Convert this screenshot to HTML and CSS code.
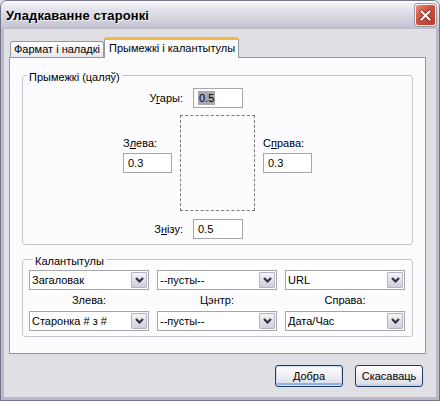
FILE: index.html
```html
<!DOCTYPE html>
<html lang="be">
<head>
<meta charset="utf-8">
<title>Уладкаванне старонкі</title>
<link rel="stylesheet" href="styles.css">
</head>
<body>
<div class="window">
  <div class="titlebar">
    <span class="title">Уладкаванне старонкі</span>
    <div class="close"><svg width="13" height="13" viewBox="0 0 13 13"><path d="M2.5 2.5 L10.5 10.5 M10.5 2.5 L2.5 10.5" stroke="#7a2a20" stroke-width="3.4" stroke-linecap="square"/><path d="M2.5 2.5 L10.5 10.5 M10.5 2.5 L2.5 10.5" stroke="#fff" stroke-width="2" stroke-linecap="square"/></svg></div>
  </div>
  <div class="body">
    <div class="tabs">
      <div class="tab">Фармат і наладкі</div>
      <div class="tab active">Прымежкі і калантытулы</div>
    </div>
    <div class="panel">
      <fieldset class="group margins">
        <legend>Прымежкі (цаляў)</legend>
        <div class="mrow">
          <span class="mlabel">У<u>г</u>ары:</span>
          <div class="field"><span class="selected">0.5</span></div>
        </div>
        <div class="middle">
          <div class="side">
            <span class="slabel">З<u>л</u>ева:</span>
            <div class="field">0.3</div>
          </div>
          <div class="page"></div>
          <div class="side">
            <span class="slabel">С<u>п</u>рава:</span>
            <div class="field">0.3</div>
          </div>
        </div>
        <div class="mrow lower">
          <span class="mlabel">З<u>н</u>ізу:</span>
          <div class="field">0.5</div>
        </div>
      </fieldset>
      <fieldset class="group hf">
        <legend>Калантытулы</legend>
        <div class="hf-grid">
          <div class="select"><span class="value">Загаловак</span><span class="drop"><svg width="9" height="6" viewBox="0 0 9 6"><path d="M1 1 L4.5 4.5 L8 1" fill="none" stroke="#33333f" stroke-width="2.2"/></svg></span></div>
          <div class="select"><span class="value">--пусты--</span><span class="drop"><svg width="9" height="6" viewBox="0 0 9 6"><path d="M1 1 L4.5 4.5 L8 1" fill="none" stroke="#33333f" stroke-width="2.2"/></svg></span></div>
          <div class="select"><span class="value">URL</span><span class="drop"><svg width="9" height="6" viewBox="0 0 9 6"><path d="M1 1 L4.5 4.5 L8 1" fill="none" stroke="#33333f" stroke-width="2.2"/></svg></span></div>
          <span class="hf-label">Злева:</span>
          <span class="hf-label">Цэнтр:</span>
          <span class="hf-label">Справа:</span>
          <div class="select"><span class="value">Старонка # з #</span><span class="drop"><svg width="9" height="6" viewBox="0 0 9 6"><path d="M1 1 L4.5 4.5 L8 1" fill="none" stroke="#33333f" stroke-width="2.2"/></svg></span></div>
          <div class="select"><span class="value">--пусты--</span><span class="drop"><svg width="9" height="6" viewBox="0 0 9 6"><path d="M1 1 L4.5 4.5 L8 1" fill="none" stroke="#33333f" stroke-width="2.2"/></svg></span></div>
          <div class="select"><span class="value">Дата/Час</span><span class="drop"><svg width="9" height="6" viewBox="0 0 9 6"><path d="M1 1 L4.5 4.5 L8 1" fill="none" stroke="#33333f" stroke-width="2.2"/></svg></span></div>
        </div>
      </fieldset>
    </div>
    <div class="buttons">
      <button class="btn default">Добра</button>
      <button class="btn">Скасаваць</button>
    </div>
  </div>
</div>
</body>
</html>
```
FILE: styles.css
```css
* { box-sizing: border-box; }
html, body { margin: 0; padding: 0; background: #e0dfe3; }
body {
  font-family: "Liberation Sans", Arial, sans-serif;
  font-size: 11px;
  color: #000;
}
u { text-decoration: underline; text-underline-offset: 1px; }

.window {
  width: 440px;
  height: 401px;
  border: 1px solid #73738c;
  border-radius: 7px 7px 0 0;
  overflow: hidden;
  display: flex;
  flex-direction: column;
  background: #e0dfe3;
}

.titlebar {
  height: 28px;
  flex: none;
  display: flex;
  align-items: center;
  justify-content: space-between;
  padding: 0 3px 0 5px;
  background: linear-gradient(#ffffff 0px, #f2f2f6 2px, #e4e4ec 8px, #d6d6e0 16px, #c9c9d6 24px, #bcbccb 28px);
}
.title {
  font-weight: bold;
  font-size: 13px;
  color: #000;
  text-shadow: 1px 1px 0 #f4f4f8;
  letter-spacing: 0.1px;
}
.close {
  width: 21px;
  height: 22px;
  border: 1px solid #f2f2f2;
  border-radius: 3px;
  background: linear-gradient(135deg, #e8937c 0%, #d2553f 40%, #b83a2c 100%);
  box-shadow: 0 0 0 1px #9a9aae;
  display: flex;
  align-items: center;
  justify-content: center;
}

.body {
  flex: 1;
  display: flex;
  flex-direction: column;
  border: 3px solid #b9b9cb;
  border-top: none;
  padding: 8px 10px 10px 5px;
  background: #e0dfe3;
}

.tabs {
  display: flex;
  align-items: flex-end;
  padding-left: 1px;
  margin-bottom: -1px;
  position: relative;
  z-index: 1;
}
.tab {
  height: 16px;
  margin-bottom: 1px;
  padding: 0 3px 0 3px;
  line-height: 15px;
  border: 1px solid #919b9c;
  border-bottom: none;
  border-radius: 3px 3px 0 0;
  background: linear-gradient(#ffffff, #f3f3f7 50%, #e6e6ee);
  white-space: nowrap;
}
.tab.active {
  height: 21px;
  margin-bottom: 0;
  padding: 0 3px 0 4px;
  line-height: 17px;
  border-top: 3px solid #f7b544;
  background: #fcfcfe;
}

.panel {
  flex: 1;
  border: 1px solid #919b9c;
  background: #fcfcfe;
  padding: 8px 12px 0 12px;
}

.group {
  margin: 0;
  min-width: 0;
  border: 1px solid #c6c6ce;
  border-radius: 3px;
  padding: 0;
}
.group legend {
  padding: 5px 2px 0 2px;
  margin-left: 4px;
  line-height: 13px;
}

.margins { padding: 4px 0 5px 0; }
.mrow {
  display: flex;
  align-items: center;
  gap: 10px;
  margin-left: 100px;
}
.mrow.lower { margin-top: 8px; }
.mlabel {
  width: 60px;
  text-align: right;
}
.field {
  width: 50px;
  height: 20px;
  border: 1px solid #a7a6aa;
  background: #fff;
  padding-left: 4px;
  line-height: 18px;
}
.selected {
  background: #a9a9b6;
  padding: 1px 1px;
}
.middle {
  display: flex;
  gap: 8px;
  margin: 7px 0 0 100px;
}
.side {
  display: flex;
  flex-direction: column;
  gap: 3px;
  padding-top: 21px;
}
.side .field { width: 49px; }
.slabel { line-height: 14px; }
.page {
  width: 75px;
  height: 96px;
  border: 1px dashed #7a7a7a;
}

.hf {
  margin-top: 5px;
  padding: 2px 6px 5px 6px;
}
.hf-grid {
  display: grid;
  grid-template-columns: repeat(3, 120px);
  grid-template-rows: 20px 21px 20px;
  column-gap: 8px;
}
.hf-label {
  text-align: center;
  line-height: 20px;
}
.select {
  display: flex;
  align-items: stretch;
  border: 1px solid #a7a6aa;
  background: #fff;
  padding: 1px;
}
.select .value {
  flex: 1;
  padding-left: 1px;
  line-height: 16px;
  white-space: nowrap;
}
.drop {
  width: 16px;
  border: 1px solid #b4b4c6;
  border-radius: 1px;
  background: linear-gradient(#f4f4f8, #e2e2ea 50%, #cfcfdb);
  display: flex;
  align-items: center;
  justify-content: center;
}

.buttons {
  display: flex;
  justify-content: flex-end;
  gap: 12px;
  margin-top: 11px;
  padding-right: 3px;
}
.btn {
  font-family: "Liberation Sans", Arial, sans-serif;
  font-size: 11px;
  color: #000;
  width: 68px;
  height: 22px;
  padding: 0;
  border: 1px solid #1c3a6b;
  border-radius: 3px;
  background: linear-gradient(#ffffff, #f2f2f6 40%, #e0e0ea 85%, #c8c8d6);
}
.btn.default {
  box-shadow: inset 0 0 0 1px #cfdcf6, inset 0 -2px 0 1px #95aee8;
}
```
